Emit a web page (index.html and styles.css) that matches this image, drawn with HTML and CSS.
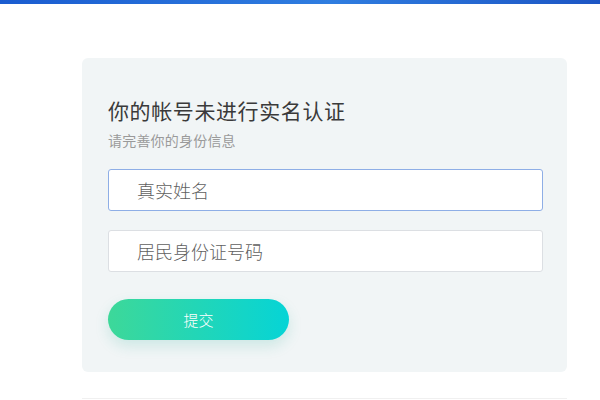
FILE: index.html
```html
<!DOCTYPE html>
<html lang="zh">
<head>
<meta charset="utf-8">
<link rel="stylesheet" href="styles.css">
</head>
<body>
<div class="topbar"></div>
<main class="page">
  <section class="card">
    <h1 class="title">你的帐号未进行实名认证</h1>
    <p class="subtitle">请完善你的身份信息</p>
    <form class="form">
      <input class="field focused" type="text" placeholder="真实姓名">
      <input class="field" type="text" placeholder="居民身份证号码">
      <button class="submit" type="button">提交</button>
    </form>
  </section>
  <div class="footer-line"></div>
</main>
</body>
</html>
```
FILE: styles.css
```css
* { box-sizing: border-box; }
html, body { margin: 0; padding: 0; background: #fff; }
body {
  width: 600px;
  height: 400px;
  overflow: hidden;
  font-family: "Noto Sans CJK SC", "Microsoft YaHei", sans-serif;
}
.topbar {
  height: 4px;
  background: linear-gradient(90deg, #1a5cd0 0%, #2f7de0 55%, #1c55c4 100%);
}
.page {
  padding: 54px 33px 0 82px;
}
.card {
  width: 485px;
  height: 314px;
  background: #f1f5f6;
  border-radius: 6px;
  padding: 38px 24px 0 26px;
}
.title {
  margin: 0;
  font-size: 21px;
  font-weight: 400;
  line-height: 28px;
  color: #3a3a3a;
  letter-spacing: 0.6px;
}
.subtitle {
  margin: 7px 0 0;
  font-size: 14px;
  line-height: 18px;
  color: #9a9a9a;
  letter-spacing: 0.2px;
}
.form {
  display: flex;
  flex-direction: column;
  align-items: flex-start;
  gap: 19px;
  margin-top: 20px;
}
.field {
  width: 435px;
  height: 42px;
  border: 1px solid #dcdfe3;
  border-radius: 3px;
  background: #fff;
  padding: 0 0 0 28px;
  font-family: inherit;
  font-size: 18px;
  font-weight: 300;
  color: #333;
  outline: none;
}
.field::placeholder { color: #5f5f5f; }
.field.focused { border: 1px solid #8eaee6; }
.submit {
  margin-top: 8px;
  width: 181px;
  height: 41px;
  border: none;
  border-radius: 21px;
  background: linear-gradient(90deg, #3dd899 0%, #06d4d6 100%);
  color: #fff;
  font-family: inherit;
  font-size: 15px;
  font-weight: 300;
  box-shadow: 0 6px 14px rgba(40, 170, 150, 0.18);
  cursor: pointer;
}
.footer-line {
  margin: 26px 0 0 0;
  height: 1px;
  background: #f0f0f0;
}
```
